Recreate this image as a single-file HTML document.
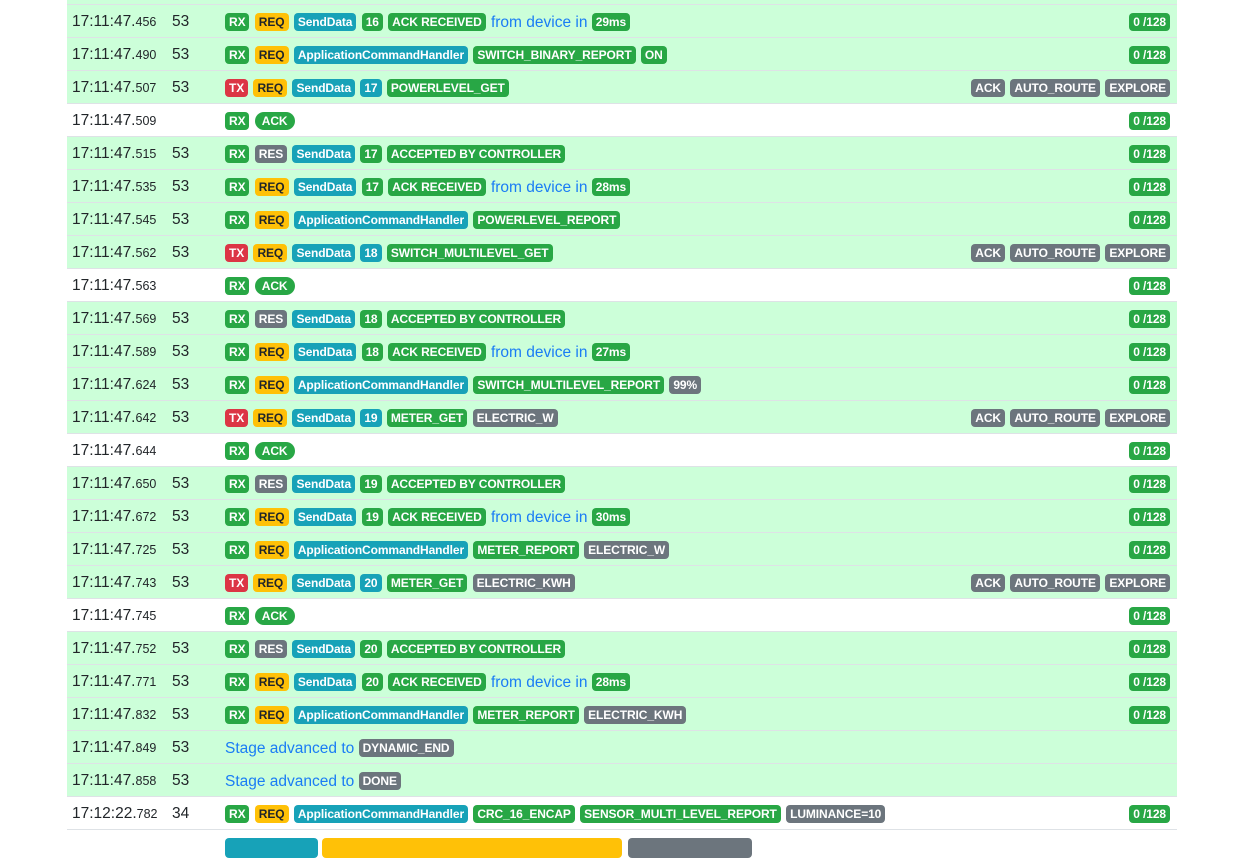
<!DOCTYPE html>
<html><head><meta charset="utf-8"><style>
body{margin:0;background:#fff;font-family:"Liberation Sans",sans-serif;color:#212529;width:1245px;height:839px;overflow:hidden}
.wrap{position:absolute;left:67px;top:0;width:1110px}
.top{height:4px;background:#ccffd9}
.r{height:32px;border-top:1px solid #dee2e6;position:relative;background:#ccffd9}
.r.w{background:#fff}
.t{position:absolute;left:5px;top:8px;font-size:15.5px}
.t small{font-size:12.5px}
.n{position:absolute;left:105px;top:8px;font-size:15.5px}
.c{position:absolute;left:158px;top:8px;white-space:nowrap;font-size:15.5px}
.rt{position:absolute;right:6px;top:8px;white-space:nowrap}
.b{display:inline-block;font-weight:bold;font-size:12px;letter-spacing:-0.1px;color:#fff;padding:2px 4px 2px;border-radius:4px;line-height:14px;vertical-align:1px;margin-right:1px}
.g{background:#28a745}.y{background:#ffc107;color:#212529}.i{background:#17a2b8}.s{background:#6c757d}.d{background:#dc3545}
.p{border-radius:10px;padding:2px 7px}
.l{color:#1a7cf5}
</style></head><body><div class="wrap"><div class="top"></div>
<div class="r"><span class="t">17:11:47.<small>456</small></span><span class="n">53</span><span class="c"><span class="b g">RX</span> <span class="b y">REQ</span> <span class="b i">SendData</span> <span class="b g">16</span> <span class="b g">ACK RECEIVED</span> <span class="l">from device in</span> <span class="b g">29ms</span></span><span class="rt"><span class="b g">0 /128</span></span></div>
<div class="r"><span class="t">17:11:47.<small>490</small></span><span class="n">53</span><span class="c"><span class="b g">RX</span> <span class="b y">REQ</span> <span class="b i">ApplicationCommandHandler</span> <span class="b g">SWITCH_BINARY_REPORT</span> <span class="b g">ON</span></span><span class="rt"><span class="b g">0 /128</span></span></div>
<div class="r"><span class="t">17:11:47.<small>507</small></span><span class="n">53</span><span class="c"><span class="b d">TX</span> <span class="b y">REQ</span> <span class="b i">SendData</span> <span class="b i">17</span> <span class="b g">POWERLEVEL_GET</span></span><span class="rt"><span class="b s">ACK</span> <span class="b s">AUTO_ROUTE</span> <span class="b s">EXPLORE</span></span></div>
<div class="r w"><span class="t">17:11:47.<small>509</small></span><span class="c"><span class="b g">RX</span> <span class="b g p">ACK</span></span><span class="rt"><span class="b g">0 /128</span></span></div>
<div class="r"><span class="t">17:11:47.<small>515</small></span><span class="n">53</span><span class="c"><span class="b g">RX</span> <span class="b s">RES</span> <span class="b i">SendData</span> <span class="b g">17</span> <span class="b g">ACCEPTED BY CONTROLLER</span></span><span class="rt"><span class="b g">0 /128</span></span></div>
<div class="r"><span class="t">17:11:47.<small>535</small></span><span class="n">53</span><span class="c"><span class="b g">RX</span> <span class="b y">REQ</span> <span class="b i">SendData</span> <span class="b g">17</span> <span class="b g">ACK RECEIVED</span> <span class="l">from device in</span> <span class="b g">28ms</span></span><span class="rt"><span class="b g">0 /128</span></span></div>
<div class="r"><span class="t">17:11:47.<small>545</small></span><span class="n">53</span><span class="c"><span class="b g">RX</span> <span class="b y">REQ</span> <span class="b i">ApplicationCommandHandler</span> <span class="b g">POWERLEVEL_REPORT</span></span><span class="rt"><span class="b g">0 /128</span></span></div>
<div class="r"><span class="t">17:11:47.<small>562</small></span><span class="n">53</span><span class="c"><span class="b d">TX</span> <span class="b y">REQ</span> <span class="b i">SendData</span> <span class="b i">18</span> <span class="b g">SWITCH_MULTILEVEL_GET</span></span><span class="rt"><span class="b s">ACK</span> <span class="b s">AUTO_ROUTE</span> <span class="b s">EXPLORE</span></span></div>
<div class="r w"><span class="t">17:11:47.<small>563</small></span><span class="c"><span class="b g">RX</span> <span class="b g p">ACK</span></span><span class="rt"><span class="b g">0 /128</span></span></div>
<div class="r"><span class="t">17:11:47.<small>569</small></span><span class="n">53</span><span class="c"><span class="b g">RX</span> <span class="b s">RES</span> <span class="b i">SendData</span> <span class="b g">18</span> <span class="b g">ACCEPTED BY CONTROLLER</span></span><span class="rt"><span class="b g">0 /128</span></span></div>
<div class="r"><span class="t">17:11:47.<small>589</small></span><span class="n">53</span><span class="c"><span class="b g">RX</span> <span class="b y">REQ</span> <span class="b i">SendData</span> <span class="b g">18</span> <span class="b g">ACK RECEIVED</span> <span class="l">from device in</span> <span class="b g">27ms</span></span><span class="rt"><span class="b g">0 /128</span></span></div>
<div class="r"><span class="t">17:11:47.<small>624</small></span><span class="n">53</span><span class="c"><span class="b g">RX</span> <span class="b y">REQ</span> <span class="b i">ApplicationCommandHandler</span> <span class="b g">SWITCH_MULTILEVEL_REPORT</span> <span class="b s">99%</span></span><span class="rt"><span class="b g">0 /128</span></span></div>
<div class="r"><span class="t">17:11:47.<small>642</small></span><span class="n">53</span><span class="c"><span class="b d">TX</span> <span class="b y">REQ</span> <span class="b i">SendData</span> <span class="b i">19</span> <span class="b g">METER_GET</span> <span class="b s">ELECTRIC_W</span></span><span class="rt"><span class="b s">ACK</span> <span class="b s">AUTO_ROUTE</span> <span class="b s">EXPLORE</span></span></div>
<div class="r w"><span class="t">17:11:47.<small>644</small></span><span class="c"><span class="b g">RX</span> <span class="b g p">ACK</span></span><span class="rt"><span class="b g">0 /128</span></span></div>
<div class="r"><span class="t">17:11:47.<small>650</small></span><span class="n">53</span><span class="c"><span class="b g">RX</span> <span class="b s">RES</span> <span class="b i">SendData</span> <span class="b g">19</span> <span class="b g">ACCEPTED BY CONTROLLER</span></span><span class="rt"><span class="b g">0 /128</span></span></div>
<div class="r"><span class="t">17:11:47.<small>672</small></span><span class="n">53</span><span class="c"><span class="b g">RX</span> <span class="b y">REQ</span> <span class="b i">SendData</span> <span class="b g">19</span> <span class="b g">ACK RECEIVED</span> <span class="l">from device in</span> <span class="b g">30ms</span></span><span class="rt"><span class="b g">0 /128</span></span></div>
<div class="r"><span class="t">17:11:47.<small>725</small></span><span class="n">53</span><span class="c"><span class="b g">RX</span> <span class="b y">REQ</span> <span class="b i">ApplicationCommandHandler</span> <span class="b g">METER_REPORT</span> <span class="b s">ELECTRIC_W</span></span><span class="rt"><span class="b g">0 /128</span></span></div>
<div class="r"><span class="t">17:11:47.<small>743</small></span><span class="n">53</span><span class="c"><span class="b d">TX</span> <span class="b y">REQ</span> <span class="b i">SendData</span> <span class="b i">20</span> <span class="b g">METER_GET</span> <span class="b s">ELECTRIC_KWH</span></span><span class="rt"><span class="b s">ACK</span> <span class="b s">AUTO_ROUTE</span> <span class="b s">EXPLORE</span></span></div>
<div class="r w"><span class="t">17:11:47.<small>745</small></span><span class="c"><span class="b g">RX</span> <span class="b g p">ACK</span></span><span class="rt"><span class="b g">0 /128</span></span></div>
<div class="r"><span class="t">17:11:47.<small>752</small></span><span class="n">53</span><span class="c"><span class="b g">RX</span> <span class="b s">RES</span> <span class="b i">SendData</span> <span class="b g">20</span> <span class="b g">ACCEPTED BY CONTROLLER</span></span><span class="rt"><span class="b g">0 /128</span></span></div>
<div class="r"><span class="t">17:11:47.<small>771</small></span><span class="n">53</span><span class="c"><span class="b g">RX</span> <span class="b y">REQ</span> <span class="b i">SendData</span> <span class="b g">20</span> <span class="b g">ACK RECEIVED</span> <span class="l">from device in</span> <span class="b g">28ms</span></span><span class="rt"><span class="b g">0 /128</span></span></div>
<div class="r"><span class="t">17:11:47.<small>832</small></span><span class="n">53</span><span class="c"><span class="b g">RX</span> <span class="b y">REQ</span> <span class="b i">ApplicationCommandHandler</span> <span class="b g">METER_REPORT</span> <span class="b s">ELECTRIC_KWH</span></span><span class="rt"><span class="b g">0 /128</span></span></div>
<div class="r"><span class="t">17:11:47.<small>849</small></span><span class="n">53</span><span class="c"><span class="l">Stage advanced to</span> <span class="b s">DYNAMIC_END</span></span></div>
<div class="r"><span class="t">17:11:47.<small>858</small></span><span class="n">53</span><span class="c"><span class="l">Stage advanced to</span> <span class="b s">DONE</span></span></div>
<div class="r w"><span class="t">17:12:22.<small>782</small></span><span class="n">34</span><span class="c"><span class="b g">RX</span> <span class="b y">REQ</span> <span class="b i">ApplicationCommandHandler</span> <span class="b g">CRC_16_ENCAP</span> <span class="b g">SENSOR_MULTI_LEVEL_REPORT</span> <span class="b s">LUMINANCE=10</span></span><span class="rt"><span class="b g">0 /128</span></span></div>
<div class="r w"><div style="position:absolute;left:158px;top:8px;width:93px;height:20px;background:#17a2b8;border-radius:4px"></div><div style="position:absolute;left:255px;top:8px;width:300px;height:20px;background:#ffc107;border-radius:4px"></div><div style="position:absolute;left:561px;top:8px;width:124px;height:20px;background:#6c757d;border-radius:4px"></div></div>
</div></body></html>
